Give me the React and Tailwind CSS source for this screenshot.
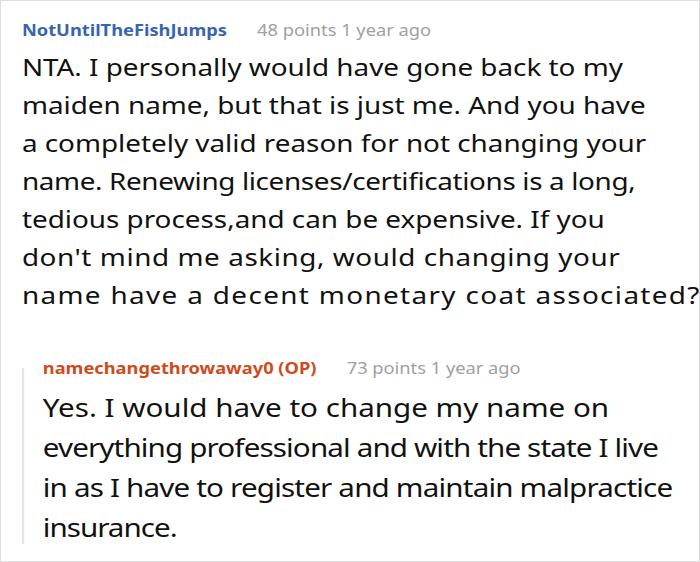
import React from "react";

const font = { fontFamily: '"Noto Sans", "Open Sans", sans-serif' };

// each line carries its own tracking so the line ends land where the shot has them
const comments = {
  parent: {
    user: "NotUntilTheFishJumps",
    meta: "48 points 1 year ago",
    lines: [
      ["NTA. I personally would have gone back to my", ""],
      ["maiden name, but that is just me. And you have", ""],
      ["a completely valid reason for not changing your", ""],
      ["name. Renewing licenses/certifications is a long,", "tracking-[-0.3px]"],
      ["tedious process,and can be expensive. If you", ""],
      ["don't mind me asking, would changing your", "tracking-[0.5px]"],
      ["name have a decent monetary coat associated?", "tracking-[1.18px]"],
    ],
  },
  reply: {
    user: "namechangethrowaway0 (OP)",
    meta: "73 points 1 year ago",
    lines: [
      ["Yes. I would have to change my name on", ""],
      ["everything professional and with the state I live", "tracking-[-0.74px]"],
      ["in as I have to register and maintain malpractice", "tracking-[-0.7px]"],
      ["insurance.", "tracking-[-0.85px]"],
    ],
  },
};

const Header = ({ user, meta, color }) => (
  <div className="flex items-center h-[26px] gap-[26px] whitespace-nowrap">
    <span className={`text-[15.75px] font-bold ${color}`}>{user}</span>
    <span className="text-[15.75px] text-[#a0a0a0]">{meta}</span>
  </div>
);

const Body = ({ lines, className }) => (
  <p className={`whitespace-nowrap text-[#111] ${className}`}>
    {lines.map(([text, tracking], i) => (
      <span key={i} className={`block ${tracking}`}>
        {text}
      </span>
    ))}
  </p>
);

export default function App() {
  const { parent, reply } = comments;
  return (
    <div className="w-[700px] h-[562px] bg-white border border-[#dedede] overflow-hidden" style={font}>
      {/* the shot is stretched sideways, so the content is too */}
      <div className="w-[602px] origin-left scale-x-[1.16] pt-[17px] pl-[18px]">
        <Header user={parent.user} meta={parent.meta} color="text-[#3766b0]" />
        <Body lines={parent.lines} className="mt-[4px] text-[24px] leading-[38px]" />

        <div className="flex mt-[42px]">
          <div className="w-[2px] bg-[#e6e6e6] mt-[12px] mb-[3px] shrink-0" />
          <div className="pl-[16px]">
            <Header user={reply.user} meta={reply.meta} color="text-[#d04b1c]" />
            <Body lines={reply.lines} className="mt-[5px] text-[25.5px] leading-[40px]" />
          </div>
        </div>
      </div>
    </div>
  );
}
